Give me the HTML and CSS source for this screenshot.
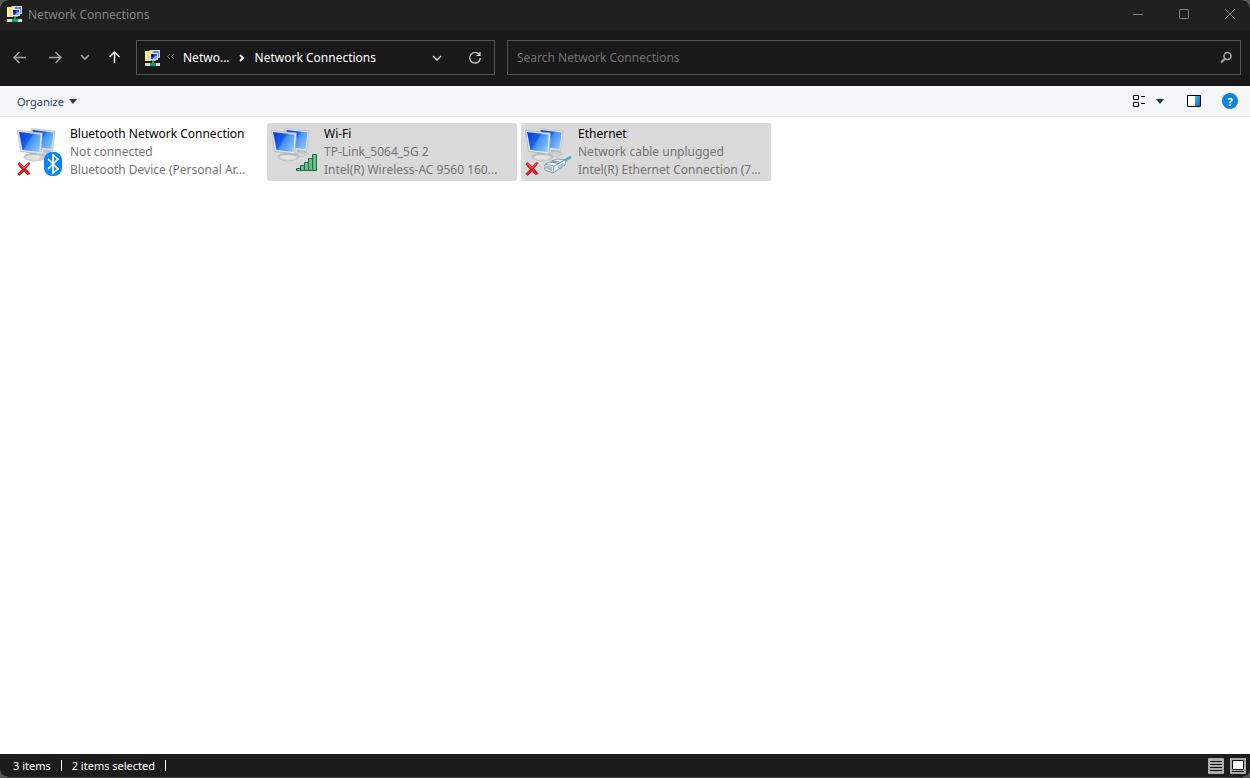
FILE: index.html
```
<!DOCTYPE html>
<html lang="en">
<head>
    <meta charset="UTF-8">
    <title>Network Connections</title>
    <link rel="stylesheet" href="styles.css">
</head>
<body>
<!-- shared icons -->
<svg class="defs" width="0" height="0" aria-hidden="true">
    <defs>
        <linearGradient id="screen" x1="0" y1="0.2" x2="1" y2="0.8">
            <stop offset="0" stop-color="#0a3fd8"/>
            <stop offset="0.42" stop-color="#1a62ec"/>
            <stop offset="0.48" stop-color="#3f8ff6"/>
            <stop offset="1" stop-color="#8cc8ff"/>
        </linearGradient>
        <linearGradient id="pane" x1="0" y1="0" x2="1" y2="1">
            <stop offset="0" stop-color="#3cc0f4"/>
            <stop offset="1" stop-color="#0067c8"/>
        </linearGradient>
        <linearGradient id="stand" x1="0" y1="0" x2="0" y2="1">
            <stop offset="0" stop-color="#a4a7aa"/>
            <stop offset="1" stop-color="#e0e2e4"/>
        </linearGradient>
        <symbol id="folder" viewBox="0 0 16 16">
            <path d="M0 1h4l1-1h4v11H0z" fill="#f5df7c"/>
            <path d="M0 1h2v10H0z" fill="#fff2ae"/>
            <path d="M7 0h8v8H7z" fill="#d8dde2"/>
            <path d="M8 1h6v6H8z" fill="#5a86dc"/>
            <path d="M5 3h8v7H5z" fill="#e6e9ec"/>
            <path d="M6 4h6v5H6z" fill="#2c4fdc"/>
            <path d="M6 4h3v3H6z" fill="#0a16a0"/>
            <path d="M10 6h2v3H8z" fill="#7fa8f4"/>
            <path d="M6 10h5v1H6z" fill="#8d9195"/>
            <path d="M0 13h15v3H0z" fill="#d9dcde"/>
            <path d="M7 11h2v2h2v3H5v-3h2z" fill="#0aa865"/>
        </symbol>
        <symbol id="computers" viewBox="0 0 48 48">
            <path d="M28 20l5 1 1 3c3 0 4 2 2 3-3 2-9 2-11 0z" fill="url(#stand)" stroke="#a9acaf" stroke-width=".5"/>
            <path d="M14 .5L38 3l-2.500 20-19.500-2z" fill="#dcdee0" stroke="#b4b7ba" stroke-width=".6"/>
            <path d="M15.500 2L36.500 4.500 34.500 21l-17-2z" fill="url(#screen)"/>
            <path d="M12 23l7 1 1 3c5-1 9 0 8 2-2 3-7 4-12 4-6-1-10-3-9-5 1-1 3-2 6-2z" fill="url(#stand)" stroke="#a0a3a6" stroke-width=".5"/>
            <ellipse cx="17" cy="29" rx="8" ry="2" fill="#eceded" opacity=".7"/>
            <path d="M.5 2.500L25.500 5 24 26 3.500 23.500z" fill="#e3e5e7" stroke="#a3a6a9" stroke-width=".6"/>
            <path d="M2 4L23.500 6.500l-1 17.500-17-2z" fill="url(#screen)"/>
        </symbol>
        <symbol id="cross" viewBox="0 0 16 16">
            <path d="M1 3l2-2 5 5 5-5 2 1-5 6 5 6-3 1-4-4-5 5-2-2 5-5z" fill="#de1c20" stroke="#a90408" stroke-width=".7"/>
            <path d="M3 2.500l5 5 5-5" fill="none" stroke="#ff7775"/>
        </symbol>
        <symbol id="chevron" viewBox="0 0 16 16">
            <path d="M4 6l4 4 4-4" fill="none" stroke="currentColor" stroke-width="1.4"/>
        </symbol>
        <symbol id="caret" viewBox="0 0 8 5">
            <path d="M0 0h8L4 5z" fill="currentColor"/>
        </symbol>
    </defs>
</svg>

<div class="window">
    <header class="titlebar">
        <svg class="icon"><use href="#folder"/></svg>
        <h1>Network Connections</h1>
        <div class="window-buttons">
            <button type="button" aria-label="Minimize">
                <svg class="icon" viewBox="0 0 16 16"><path d="M3 8.500h10" stroke="currentColor"/></svg>
            </button>
            <button type="button" aria-label="Maximize">
                <svg class="icon" viewBox="0 0 16 16"><rect x="3.500" y="3.500" width="9" height="9" rx="1" fill="none" stroke="currentColor"/></svg>
            </button>
            <button type="button" aria-label="Close">
                <svg class="icon" viewBox="0 0 16 16"><path d="M3 3l10 10M13 3L3 13" stroke="currentColor"/></svg>
            </button>
        </div>
    </header>

    <nav class="navbar">
        <button type="button" class="nav-back" aria-label="Back">
            <svg class="icon" viewBox="0 0 16 16"><path d="M14 7.500H2.500M7.500 2L2 7.500 7.500 13" fill="none" stroke="currentColor" stroke-width="1.400"/></svg>
        </button>
        <button type="button" class="nav-forward" aria-label="Forward">
            <svg class="icon" viewBox="0 0 16 16"><path d="M2 7.500h11.500M8.500 2L14 7.500 8.500 13" fill="none" stroke="currentColor" stroke-width="1.400"/></svg>
        </button>
        <button type="button" class="nav-recent" aria-label="Recent locations">
            <svg class="icon" viewBox="0 0 16 16"><path d="M4 5l4 4 4-4" fill="none" stroke="currentColor" stroke-width="1.600"/></svg>
        </button>
        <button type="button" class="nav-up" aria-label="Up">
            <svg class="icon" viewBox="0 0 16 16"><path d="M8.500 13V2M3.500 7l5-5 5 5" fill="none" stroke="currentColor" stroke-width="1.400"/></svg>
        </button>
        <div class="address">
            <svg class="icon"><use href="#folder"/></svg>
            <button type="button" class="overflow" aria-label="More folders">
                <svg class="icon" viewBox="0 0 16 16"><path d="M7 4L4.500 6.500 7 9M11 4L8.500 6.500 11 9" fill="none" stroke="currentColor"/></svg>
            </button>
            <a href="#">Netwo...</a>
            <svg class="icon separator" viewBox="0 0 16 16"><path d="M6 5l3 3-3 3" fill="none" stroke="currentColor" stroke-width="1.800"/></svg>
            <a href="#">Network Connections</a>
            <div class="address-buttons">
                <button type="button" aria-label="Previous locations">
                    <svg class="icon"><use href="#chevron"/></svg>
                </button>
                <button type="button" aria-label="Refresh">
                    <svg class="icon" viewBox="0 0 16 16"><path d="M12.500 5A5.300 5.300 0 1 0 13.300 8M13 2v3.500H9.500" fill="none" stroke="currentColor" stroke-width="1.200"/></svg>
                </button>
            </div>
        </div>
        <div class="search">
            <input type="search" placeholder="Search Network Connections" aria-label="Search Network Connections">
            <svg class="icon" viewBox="0 0 16 16"><circle cx="9.500" cy="6" r="3.500" fill="none" stroke="currentColor" stroke-width="1.500"/><path d="M7 8.500L3 12.500" stroke="currentColor" stroke-width="2"/></svg>
        </div>
    </nav>

    <div class="toolbar">
        <button type="button" class="organize">Organize <svg class="caret"><use href="#caret"/></svg></button>
        <div class="view-buttons">
            <button type="button" aria-label="Change your view">
                <svg class="icon" viewBox="0 0 16 16"><path d="M3.500 2.500h5v4h-5zM3.500 9.500h5v4h-5z" fill="#fff" stroke="#000"/><path d="M11 3.500h4M11 10.500h4" stroke="#000"/></svg>
            </button>
            <button type="button" aria-label="More options">
                <svg class="caret"><use href="#caret"/></svg>
            </button>
            <button type="button" class="preview" aria-label="Show the preview pane">
                <svg class="icon" viewBox="0 0 16 16"><path d="M1.500 2.500h13v11h-13z" fill="#fff"/><path d="M9 3h5v10H9z" fill="url(#pane)"/><path d="M1.500 2.500h13v11h-13z" fill="none" stroke="#000"/></svg>
            </button>
            <button type="button" class="help" aria-label="Get help">?</button>
        </div>
    </div>

    <main class="connections">
        <button type="button" class="connection">
            <svg class="connection-icon" viewBox="0 0 48 48">
                <use href="#computers" width="48" height="48"/>
                <use href="#cross" x="0" y="33" width="14" height="15"/>
                <rect x="27" y="24" width="18" height="24" rx="8" fill="#0a84f8"/>
                <path d="M31 31l10 10-5 4V27l5 4-10 10" fill="none" stroke="#fff" stroke-width="1.700"/>
            </svg>
            <span class="connection-text">
                <span class="name">Bluetooth Network Connection</span>
                <span>Not connected</span>
                <span>Bluetooth Device (Personal Ar...</span>
            </span>
        </button>
        <button type="button" class="connection selected">
            <svg class="connection-icon" viewBox="0 0 48 48">
                <use href="#computers" width="48" height="48"/>
                <g fill="#6fb98b" stroke="#167340">
                    <path d="M25.500 40.500h4v2h-4z"/>
                    <path d="M29.500 37.500h4v5h-4z"/>
                    <path d="M33.500 34.500h4v8h-4z"/>
                    <path d="M37.500 30.500h4v12h-4z"/>
                    <path d="M41.500 26.500h4v16h-4z"/>
                </g>
            </svg>
            <span class="connection-text">
                <span class="name">Wi-Fi</span>
                <span>TP-Link_5064_5G 2</span>
                <span>Intel(R) Wireless-AC 9560 160...</span>
            </span>
        </button>
        <button type="button" class="connection selected">
            <svg class="connection-icon" viewBox="0 0 48 48">
                <use href="#computers" width="48" height="48"/>
                <use href="#cross" x="0" y="33" width="14" height="15"/>
                <path d="M37 34l9-5" stroke="#52b4dc" stroke-width="3"/>
                <path d="M20 36l12-5 9 1-1 5-12 8-8-3z" fill="#e9eef4" stroke="#718ba6" stroke-width=".8"/>
                <path d="M20 36l9 2 11-6M29 38l-1 7M32 36l6-3" fill="none" stroke="#718ba6" stroke-width=".8"/>
                <path d="M22 38v3M24 38v4M26 39v4M25 34l7 1M27 33l7 1" fill="none" stroke="#66707c" stroke-width=".8"/>
                <path d="M33 38l5-3v3l-5 3z" fill="#91c7e8"/>
            </svg>
            <span class="connection-text">
                <span class="name">Ethernet</span>
                <span>Network cable unplugged</span>
                <span>Intel(R) Ethernet Connection (7...</span>
            </span>
        </button>
    </main>

    <footer class="statusbar">
        <span>3 items</span>
        <span>2 items selected</span>
        <div class="layout-buttons">
            <button type="button" aria-label="Details view">
                <svg class="icon" viewBox="0 0 16 16"><rect width="16" height="16" rx="1" fill="#ababab"/><path d="M2 3.500h12M2 6.500h12M2 9.500h12M2 12.500h12" stroke="#111"/></svg>
            </button>
            <button type="button" aria-label="Large icons view">
                <svg class="icon" viewBox="0 0 16 16"><rect width="16" height="16" rx="1" fill="#ababab"/><path d="M2.500 2.500h11v9h-11z" fill="#fff" stroke="#000"/><path d="M2 13.500h12" stroke="#111"/></svg>
            </button>
        </div>
    </footer>
</div>
</body>
</html>
```
FILE: styles.css
```
* {
    box-sizing: border-box;
    margin: 0;
    padding: 0;
}

body {
    background: #555;
    font-family: "Noto Sans", sans-serif;
    font-size: 12px;
}

button {
    display: flex;
    align-items: center;
    justify-content: center;
    border: 0;
    background: none;
    color: inherit;
    font: inherit;
}

a {
    color: inherit;
    text-decoration: none;
}

.defs {
    display: block;
}

.icon {
    display: block;
    flex: none;
    width: 16px;
    height: 16px;
}

.caret {
    width: 8px;
    height: 5px;
}

.window {
    display: flex;
    flex-direction: column;
    min-height: 100vh;
    overflow: hidden;
    border-bottom: 1px solid #444;
    border-radius: 8px;
    background: #fff;
}

/* title bar */
.titlebar {
    display: flex;
    align-items: center;
    height: 30px;
    padding: 0 0 2px 7px;
    background: #202020;
    color: #848484;
}

.titlebar h1 {
    margin-left: 5px;
    font-size: 12px;
    font-weight: normal;
}

.window-buttons {
    display: flex;
    gap: 6px;
    margin-left: auto;
}

.window-buttons button {
    width: 40px;
    height: 28px;
}

/* navigation */
.navbar {
    display: flex;
    align-items: center;
    height: 56px;
    padding: 0 9px 1px 2px;
    background: #191919;
    color: #a8a8a8;
}

.nav-back {
    width: 36px;
}

.nav-forward {
    width: 34px;
}

.nav-recent {
    width: 26px;
}

.nav-up {
    width: 32px;
    margin-right: 6px;
    color: #fff;
}

.address,
.search {
    display: flex;
    align-items: center;
    height: 35px;
    border: 1px solid #535353;
}

.address {
    flex: 0 1 359px;
    margin-right: 12px;
    padding-left: 8px;
    color: #fff;
    white-space: nowrap;
}

.overflow {
    margin: 0 4px 0 2px;
    color: #707070;
}

.separator {
    margin: 0 5px 0 4px;
}

.address-buttons {
    display: flex;
    margin-left: auto;
    color: #ddd;
}

.address-buttons button {
    width: 38px;
    height: 33px;
}

.search {
    flex: 1;
    padding: 0 6px 0 9px;
}

.search input {
    flex: 1;
    min-width: 0;
    border: 0;
    outline: 0;
    background: none;
    color: #fff;
    font: inherit;
}

.search input::placeholder {
    color: #737373;
}

/* toolbar */
.toolbar {
    display: flex;
    align-items: center;
    justify-content: space-between;
    height: 31px;
    padding: 0 12px 0 17px;
    border-bottom: 1px solid #e8e9eb;
    background: #f5f6f8;
    color: #1e395b;
    font-size: 11px;
}

.organize {
    gap: 5px;
}

.view-buttons {
    display: flex;
    align-items: center;
    gap: 10px;
}

.view-buttons .preview {
    margin-left: 12px;
}

.view-buttons .help {
    width: 16px;
    height: 16px;
    margin-left: 10px;
    border-radius: 50%;
    background: #0f82dc;
    color: #fff;
    font-size: 11px;
    font-weight: bold;
}

/* connections */
.connections {
    display: flex;
    flex: 1;
    flex-wrap: wrap;
    align-content: flex-start;
    gap: 4px;
    padding: 6px 13px;
}

.connection {
    gap: 5px;
    width: 250px;
    height: 58px;
    padding: 0 4px;
    border-radius: 2px;
    color: #737373;
    line-height: 18px;
    text-align: left;
}

.connection.selected {
    background: #d9d9d9;
}

.connection-icon {
    flex: none;
    width: 48px;
    height: 48px;
}

.connection-text {
    flex: 1;
    min-width: 0;
}

.connection-text span {
    display: block;
    overflow: hidden;
    text-overflow: ellipsis;
    white-space: nowrap;
}

.connection-text .name {
    color: #000;
}

/* status bar */
.statusbar {
    display: flex;
    align-items: center;
    height: 23px;
    padding: 0 4px 0 13px;
    background: #1c1c1c;
    color: #fff;
    font-size: 11px;
    line-height: 11px;
}

.statusbar span {
    margin-right: 10px;
    padding-right: 10px;
    border-right: 1px solid #fff;
}

.layout-buttons {
    display: flex;
    gap: 6px;
    margin-left: auto;
}
```
